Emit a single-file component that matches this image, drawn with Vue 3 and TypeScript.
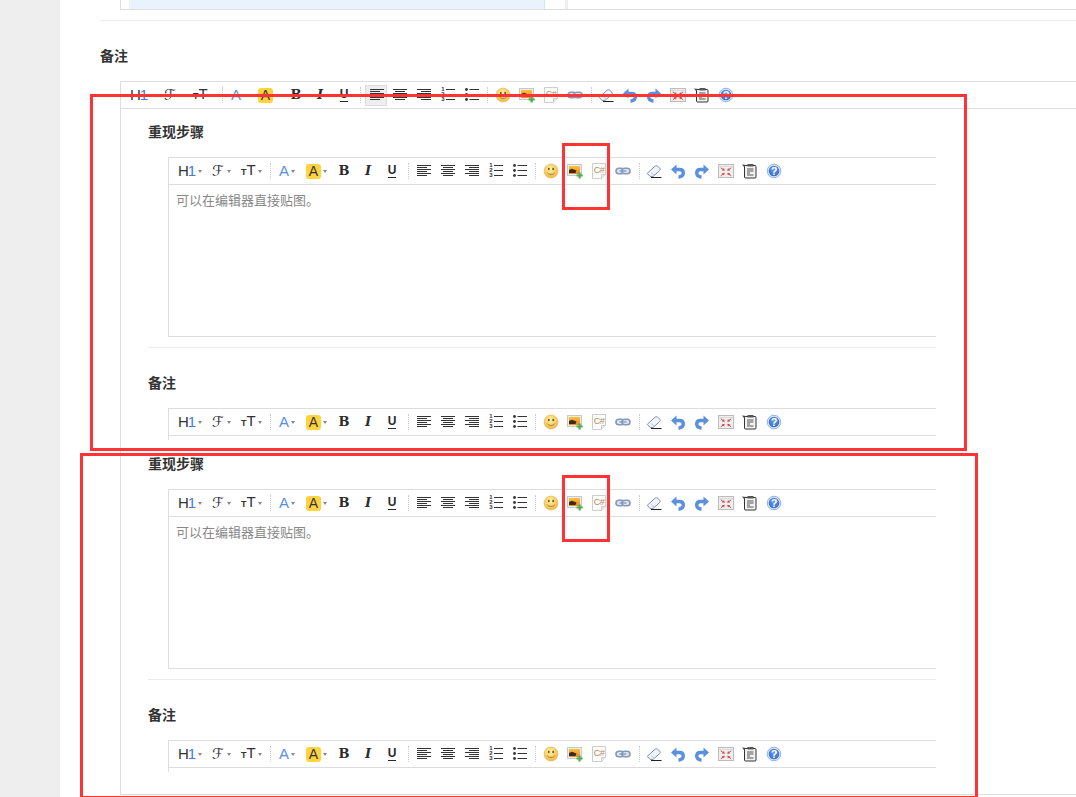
<script setup lang="ts">
interface Tool {
  id: string
  cls?: string
  icon?: string
  pre?: string
  text?: string
  post?: string
  over?: string
  caret?: boolean
  sep?: boolean
}

const tools: Tool[] = [
  { id: 'title', cls: 'h1', text: 'H', post: '1', caret: true },
  { id: 'font', cls: 'ff', text: 'ℱ', caret: true },
  { id: 'size', cls: 'fs', pre: 'T', text: 'T', caret: true },
  { id: 's1', sep: true },
  { id: 'color', cls: 'fc', text: 'A', caret: true },
  { id: 'hilite', cls: 'hl', text: 'A', caret: true },
  { id: 'bold', cls: 'btn bold', text: 'B' },
  { id: 'italic', cls: 'btn ital', text: 'I' },
  { id: 'under', cls: 'btn undl', text: 'U' },
  { id: 's2', sep: true },
  { id: 'al', cls: 'btn al', icon: 'i-al' },
  { id: 'ac', cls: 'btn', icon: 'i-ac' },
  { id: 'ar', cls: 'btn', icon: 'i-ar' },
  { id: 'ol', cls: 'btn ol', icon: 'i-ol', over: '1\n2\n3' },
  { id: 'ul', cls: 'btn', icon: 'i-ul' },
  { id: 's3', cls: 'wide', sep: true },
  { id: 'smile', cls: 'btn', icon: 'i-smile' },
  { id: 'img', cls: 'btn', icon: 'i-img' },
  { id: 'code', cls: 'btn code', icon: 'i-code', over: 'C#' },
  { id: 'link', cls: 'btn', icon: 'i-link' },
  { id: 's4', sep: true },
  { id: 'erase', cls: 'btn', icon: 'i-erase' },
  { id: 'undo', cls: 'btn', icon: 'i-undo' },
  { id: 'redo', cls: 'btn', icon: 'i-redo' },
  { id: 'full', cls: 'btn', icon: 'i-full' },
  { id: 'paste', cls: 'btn', icon: 'i-paste' },
  { id: 'help', cls: 'btn help', icon: 'i-help', over: '?' },
]

const marks = ['m-a', 'm-b', 'm-c', 'm-d']
</script>

<template>
  <div class="page">
    <svg class="defs" width="0" height="0" aria-hidden="true">
      <defs>
        <radialGradient id="g-smile" cx="0.45" cy="0.35" r="0.7">
          <stop offset="0" stop-color="#fff3a6" />
          <stop offset="1" stop-color="#eeb23c" />
        </radialGradient>
        <linearGradient id="g-img" x1="0" y1="0" x2="0" y2="1">
          <stop offset="0" stop-color="#fbc23a" />
          <stop offset="1" stop-color="#e9892c" />
        </linearGradient>
        <radialGradient id="g-help" cx="0.5" cy="0.4" r="0.6">
          <stop offset="0" stop-color="#6a9ae6" />
          <stop offset="1" stop-color="#336cce" />
        </radialGradient>
      </defs>
      <symbol id="i-al" viewBox="0 0 16 16">
        <path d="M2 2.500h14M2 4.500h10M2 6.500h14M2 8.500h10M2 10.500h14M2 12.500h10" stroke="#333" fill="none" />
      </symbol>
      <symbol id="i-ac" viewBox="0 0 16 16">
        <path d="M2 2.500h14M4 4.500h10M2 6.500h14M4 8.500h10M2 10.500h14M4 12.500h10" stroke="#333" fill="none" />
      </symbol>
      <symbol id="i-ar" viewBox="0 0 16 16">
        <path d="M2 2.500h14M6 4.500h10M2 6.500h14M6 8.500h10M2 10.500h14M6 12.500h10" stroke="#333" fill="none" />
      </symbol>
      <symbol id="i-ol" viewBox="0 0 16 16">
        <path d="M7 2.500h9M7 7.500h9M7 12.500h9" stroke="#333" fill="none" />
      </symbol>
      <symbol id="i-ul" viewBox="0 0 16 16">
        <circle cx="3.500" cy="2.500" r="1.400" fill="#333" />
        <circle cx="3.500" cy="7.500" r="1.400" fill="#333" />
        <circle cx="3.500" cy="12.500" r="1.400" fill="#333" />
        <path d="M6.500 2.500h9.500M6.500 7.500h9.500M6.500 12.500h9.500" stroke="#333" fill="none" />
      </symbol>
      <symbol id="i-smile" viewBox="0 0 16 16">
        <circle cx="8" cy="8" r="7" fill="url(#g-smile)" stroke="#e6b04a" stroke-width="0.600" />
        <ellipse cx="5.800" cy="6" rx="0.900" ry="1.300" fill="#6b5218" />
        <ellipse cx="10.200" cy="6" rx="0.900" ry="1.300" fill="#6b5218" />
        <path d="M4.200 9.500c1 2.600 6.600 2.600 7.600 0" stroke="#a5822c" fill="none" />
      </symbol>
      <symbol id="i-img" viewBox="0 0 16 16">
        <rect x="0.500" y="1.500" width="14" height="11" fill="#ededed" stroke="#c8c8c8" />
        <rect x="2" y="3" width="11" height="8" fill="url(#g-img)" />
        <path d="M2 7l3-1.200 2.500 1 2 .8-1 2.400H2z" fill="#3f2b14" />
        <path d="M9.500 11.500h2v-2h2.200v2h2v2h-2v2h-2.200v-2h-2z" fill="#4caf50" />
      </symbol>
      <symbol id="i-code" viewBox="0 0 16 16">
        <path d="M1.500 0.500h13v11l-4 4h-9z" fill="#fbfbfb" stroke="#cdcdcd" />
        <path d="M14.500 11.500h-4v4" fill="#ebebeb" stroke="#cdcdcd" />
      </symbol>
      <symbol id="i-link" viewBox="0 0 16 16">
        <rect x="1" y="5.200" width="8" height="5.600" rx="2.800" fill="#dfe6f1" stroke="#8499bb" stroke-width="1.600" />
        <rect x="7" y="5.200" width="8" height="5.600" rx="2.800" fill="#dfe6f1" stroke="#8499bb" stroke-width="1.600" />
        <path d="M4.500 8h7" stroke="#7b90b3" stroke-width="1.200" />
      </symbol>
      <symbol id="i-erase" viewBox="0 0 16 16">
        <path d="M1.300 10.300L8.800 3.400c1-.9 2.200-.9 3 0l2 1.800c.7.800.6 1.700-.1 2.300L7.200 13.400H4z" fill="#f1f4f9" stroke="#7c8db0" />
        <path d="M5 9.500l3.500 3" stroke="#b7c2d6" fill="none" />
        <path d="M5 14.500h10.500" stroke="#222" fill="none" />
      </symbol>
      <symbol id="i-undo" viewBox="0 0 16 16">
        <path d="M1 6.500L6.500 1.500v10z" fill="#5a90de" />
        <path d="M5 6.500h4.500c2.600 0 3.800 1.700 3.800 3.600 0 2.200-1.900 3.700-4.800 4.100" stroke="#5a90de" stroke-width="3.400" fill="none" />
      </symbol>
      <symbol id="i-redo" viewBox="0 0 16 16">
        <path d="M15 6.500L9.500 1.500v10z" fill="#5a90de" />
        <path d="M11 6.500H6.500C3.900 6.500 2.700 8.200 2.700 10.100c0 2.200 1.900 3.700 4.800 4.100" stroke="#5a90de" stroke-width="3.400" fill="none" />
      </symbol>
      <symbol id="i-full" viewBox="0 0 16 16">
        <rect x="0.500" y="1.500" width="15" height="13" fill="#efefef" stroke="#bcbcbc" />
        <path d="M1 3.500h14" stroke="#dadada" />
        <path d="M2.800 4.800l2.300 1.700M13.200 4.800l-2.300 1.700M2.800 12.800l2.300-1.700M13.200 12.800l-2.300-1.700" stroke="#d8474a" fill="none" />
        <path d="M6.800 7.800l-3-.4 2.200-2.400zM9.200 7.800l3-.4-2.200-2.400zM6.800 9.800l-3 .4 2.200 2.400zM9.200 9.800l3 .4-2.200 2.400z" fill="#d8474a" />
      </symbol>
      <symbol id="i-paste" viewBox="0 0 16 16">
        <path d="M0 1.500l4.500 0.500 1 3-2.500.2z" fill="#444" />
        <rect x="2.500" y="2.500" width="11.500" height="12.500" rx="1" fill="#f2f2f2" stroke="#333" />
        <rect x="5.500" y="1" width="6" height="2.500" fill="#555" />
        <path d="M5 6h6.500M5 8h6.500M5 10h3M5 12h6.500" stroke="#555" fill="none" />
      </symbol>
      <symbol id="i-help" viewBox="0 0 16 16">
        <circle cx="8" cy="8" r="6.800" fill="#dbe7fb" stroke="#7ba3e6" stroke-width="0.800" />
        <circle cx="8" cy="8" r="5.300" fill="url(#g-help)" />
      </symbol>
    </svg>

    <aside class="rail"></aside>
    <main class="main">
      <div class="table-end">
        <div class="cell-blue"></div>
        <div class="cell-gap"></div>
      </div>
      <div class="rule"></div>
      <h4 class="label first">备注</h4>

      <div class="outer">
        <div class="bar main-bar">
          <template v-for="t in tools" :key="t.id">
            <i v-if="t.sep" class="sep" :class="t.cls"></i>
            <span v-else class="tool" :class="t.cls">
              <svg v-if="t.icon" class="ic" width="16" height="16"><use :href="'#' + t.icon" /></svg>
              <span v-else class="txt"><small v-if="t.pre">{{ t.pre }}</small><b>{{ t.text }}</b><em v-if="t.post">{{ t.post }}</em></span>
              <span v-if="t.over" class="over">{{ t.over }}</span>
              <i v-if="t.caret" class="caret"></i>
            </span>
          </template>
        </div>

        <div class="body">
          <section v-for="n in 2" :key="n" class="block">
            <h4 class="label">重现步骤</h4>
            <div class="editor">
              <div class="bar">
                <template v-for="t in tools" :key="t.id">
                  <i v-if="t.sep" class="sep" :class="t.cls"></i>
                  <span v-else class="tool" :class="t.cls">
                    <svg v-if="t.icon" class="ic" width="16" height="16"><use :href="'#' + t.icon" /></svg>
                    <span v-else class="txt"><small v-if="t.pre">{{ t.pre }}</small><b>{{ t.text }}</b><em v-if="t.post">{{ t.post }}</em></span>
                    <span v-if="t.over" class="over">{{ t.over }}</span>
                    <i v-if="t.caret" class="caret"></i>
                  </span>
                </template>
              </div>
              <div class="area">可以在编辑器直接贴图。</div>
            </div>
            <div class="rule inner"></div>
            <h4 class="label note">备注</h4>
            <div class="editor short">
              <div class="bar">
                <template v-for="t in tools" :key="t.id">
                  <i v-if="t.sep" class="sep" :class="t.cls"></i>
                  <span v-else class="tool" :class="t.cls">
                    <svg v-if="t.icon" class="ic" width="16" height="16"><use :href="'#' + t.icon" /></svg>
                    <span v-else class="txt"><small v-if="t.pre">{{ t.pre }}</small><b>{{ t.text }}</b><em v-if="t.post">{{ t.post }}</em></span>
                    <span v-if="t.over" class="over">{{ t.over }}</span>
                    <i v-if="t.caret" class="caret"></i>
                  </span>
                </template>
              </div>
              <div class="stub"></div>
            </div>
          </section>
        </div>
      </div>
    </main>

    <div v-for="m in marks" :key="m" class="mark" :class="m"></div>
  </div>
</template>

<style>
html,
body {
  margin: 0;
  background: #fff;
}
</style>

<style scoped>
.page {
  position: relative;
  display: flex;
  width: 1076px;
  height: 797px;
  overflow: hidden;
  font-family: "Liberation Sans", "Noto Sans CJK SC", sans-serif;
  color: #333;
  background: #fff;
}
.defs {
  position: absolute;
}
.rail {
  flex: 0 0 60px;
  background: #eee;
}
.main {
  flex: 1;
  min-width: 0;
  padding-left: 40px;
}
.table-end {
  display: flex;
  box-sizing: border-box;
  height: 10px;
  margin-left: 20px;
  padding-left: 8px;
  border-left: 1px solid #ddd;
  border-bottom: 1px solid #ddd;
}
.cell-blue {
  box-sizing: border-box;
  width: 416px;
  background: #e9f2fd;
  border-right: 1px solid #cfe4fb;
}
.cell-gap {
  box-sizing: border-box;
  width: 23px;
  border-right: 3px solid #eee;
}
.rule {
  height: 1px;
  margin-top: 10px;
  background: #eee;
}
.label {
  margin: 0;
  height: 20px;
  line-height: 20px;
  font-size: 14px;
  font-weight: 700;
  color: #333;
}
.label.first,
.label.note {
  margin-top: 25px;
}
.outer {
  box-sizing: border-box;
  height: 714px;
  margin: 15px 0 0 20px;
  border-left: 1px solid #ddd;
  border-top: 1px solid #ddd;
  border-bottom: 1px solid #ddd;
}
.body {
  width: 788px;
  margin-left: 27px;
  padding-top: 13px;
  overflow: hidden;
}
.block + .block {
  margin-top: 14px;
}
.editor {
  margin: 15px 0 0 20px;
  border-left: 1px solid #ddd;
  border-top: 1px solid #ddd;
}
.area {
  box-sizing: border-box;
  height: 152px;
  padding: 6px 7px;
  border-bottom: 1px solid #ddd;
  font-size: 13px;
  line-height: 20px;
  color: #888;
}
.stub {
  height: 4px;
}
.bar {
  display: flex;
  align-items: center;
  box-sizing: border-box;
  height: 27px;
  padding-left: 4px;
  border-bottom: 1px solid #ddd;
}
.sep {
  flex: none;
  height: 16px;
  margin: 0 2px 0 4px;
  border-left: 1px dotted #ccc;
}
.sep.wide {
  margin-right: 3px;
}
.tool {
  position: relative;
  flex: none;
  display: flex;
  align-items: center;
  box-sizing: border-box;
  height: 24px;
  padding-left: 5px;
}
.h1 {
  width: 34px;
}
.ff {
  width: 29px;
}
.fs {
  width: 30px;
}
.fc {
  width: 28px;
  padding-left: 6px;
}
.hl {
  width: 31px;
}
.btn {
  width: 24px;
  justify-content: center;
  padding-left: 0;
}
.ic {
  display: block;
  flex: none;
}
.over {
  position: absolute;
  white-space: pre-line;
  text-align: center;
}
.ol .over {
  left: 6px;
  top: 4px;
  width: 4px;
  font-size: 6px;
  line-height: 5px;
  font-weight: 700;
  color: #333;
}
.code .over {
  left: 4px;
  right: 4px;
  top: 4px;
  font-size: 9px;
  line-height: 14px;
  letter-spacing: -0.5px;
  color: #b08f5c;
}
.help .over {
  left: 4px;
  right: 4px;
  top: 4px;
  font-size: 11px;
  line-height: 16px;
  font-weight: 700;
  color: #fff;
}
.txt {
  display: flex;
  align-items: baseline;
  font-size: 15px;
  line-height: 16px;
  color: #333;
}
.txt b {
  font-weight: 400;
}
.txt em {
  font-style: normal;
  color: #3d7be8;
  margin-left: -1px;
}
.txt small {
  font-size: 9px;
  font-weight: 700;
}
.ff .txt {
  width: 13px;
  font-family: "DejaVu Sans", sans-serif;
  font-size: 15px;
  font-style: italic;
}
.fc .txt {
  color: #5a8fe8;
}
.hl .txt {
  justify-content: center;
  width: 15px;
  height: 15px;
  line-height: 15px;
  font-size: 14px;
  background: #ffd33d;
  border-radius: 3px;
}
.bold .txt,
.ital .txt {
  font-family: "DejaVu Serif", serif;
  font-size: 13px;
  color: #2b2b2b;
}
.bold .txt b,
.ital .txt b,
.undl .txt b {
  font-weight: 700;
}
.ital .txt b {
  font-style: italic;
}
.undl .txt {
  font-size: 12px;
  line-height: 13px;
  color: #2b2b2b;
  border-bottom: 1px solid #2b2b2b;
}
.caret {
  flex: none;
  width: 0;
  height: 0;
  margin: 1px 0 0 2px;
  border-left: 2.500px solid transparent;
  border-right: 2.500px solid transparent;
  border-top: 3px solid #888;
}
.main-bar .al {
  width: 22px;
  height: 21px;
  margin-left: 2px;
  background: #eee;
  box-shadow: inset 0 0 0 1px #ddd;
}
.mark {
  position: absolute;
  box-sizing: border-box;
  border: 3px solid #f33;
  pointer-events: none;
}
.m-a {
  left: 90px;
  top: 94px;
  width: 877px;
  height: 357px;
}
.m-b {
  left: 80px;
  top: 453px;
  width: 898px;
  height: 346px;
}
.m-c {
  left: 562px;
  top: 143px;
  width: 48px;
  height: 67px;
}
.m-d {
  left: 562px;
  top: 475px;
  width: 48px;
  height: 67px;
}
</style>
